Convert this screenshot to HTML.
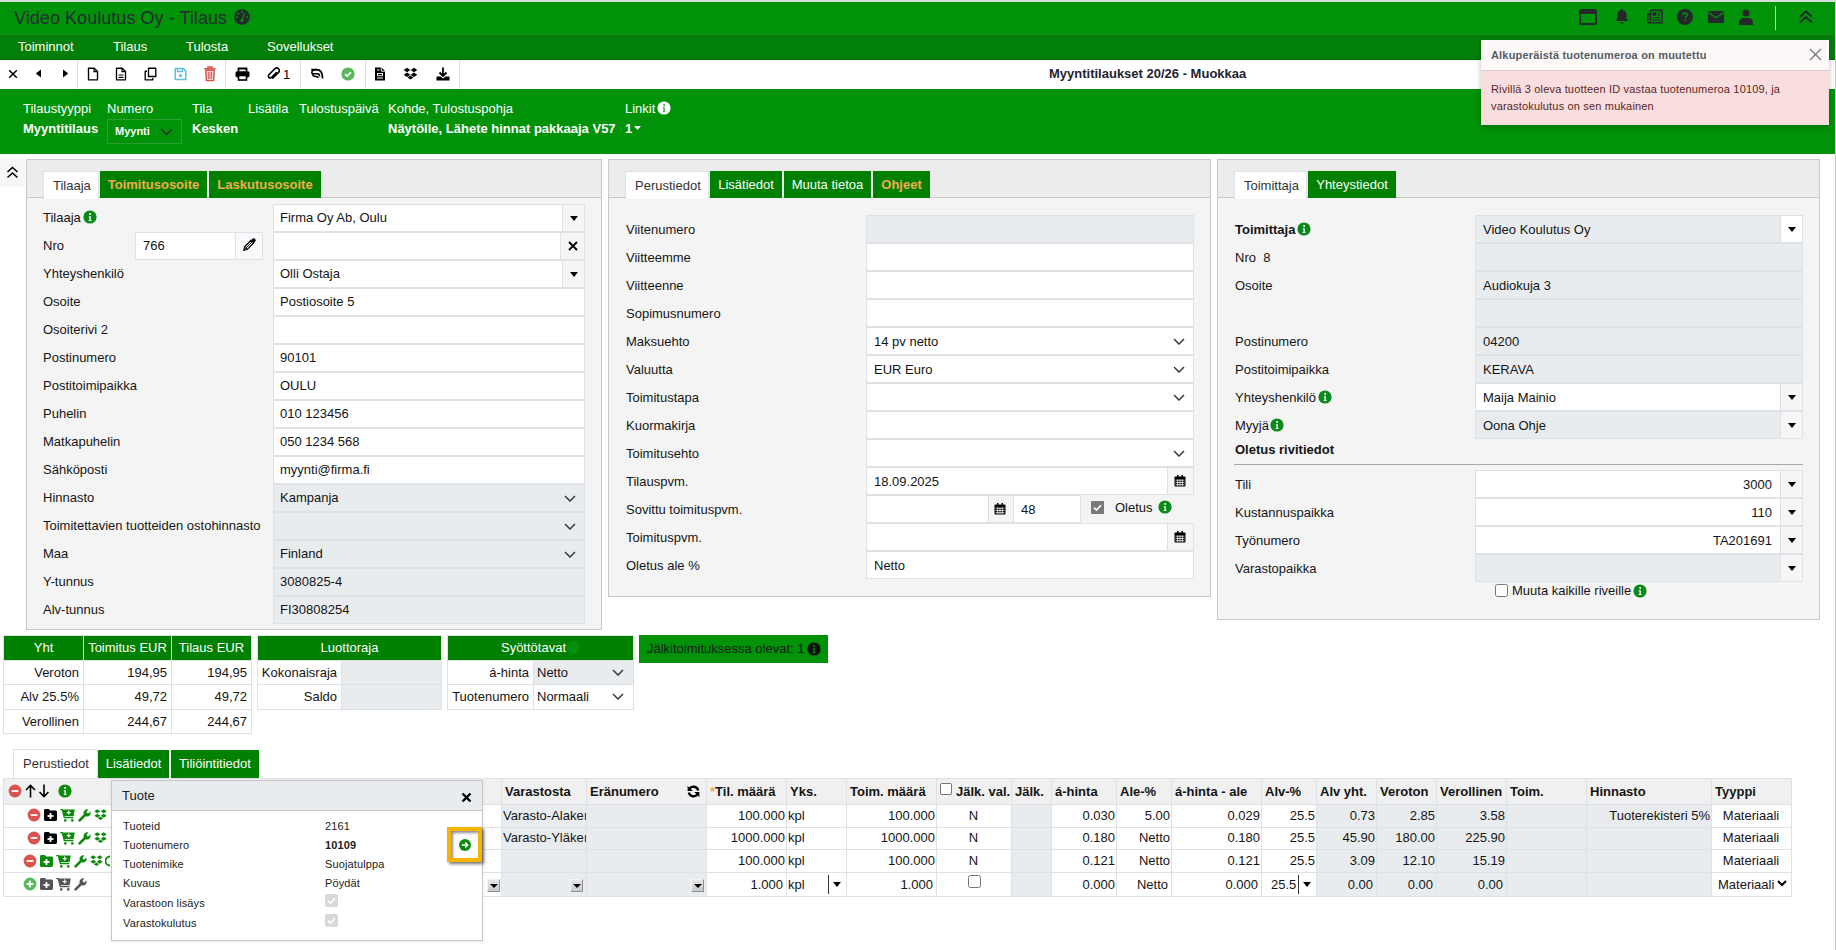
<!DOCTYPE html>
<html><head><meta charset="utf-8">
<style>
*{box-sizing:border-box}
html,body{margin:0;padding:0}
body{width:1836px;height:950px;overflow:hidden;position:relative;background:#fff;font-family:"Liberation Sans",sans-serif;font-size:13px;color:#141414}
.abs{position:absolute}
#topline{left:0;top:0;width:1836px;height:2px;background:#dcdcdc}
#rightline{left:1835px;top:0;width:1px;height:950px;background:#c8c8c8}
#topbar{left:0;top:2px;width:1835px;height:32px;background:#009208}
#title{left:14px;top:6px;font-size:18px;color:#262b30;letter-spacing:0.05px}
#menubar{left:0;top:34px;width:1835px;height:26px;background:#027f08;border-top:1px solid #1b8b1d;border-bottom:1px solid #006e05}
#menubar span{position:absolute;top:4px;color:#fff;font-size:13px}
#toolbar{left:0;top:60px;width:1835px;height:29px;background:#fff}
.tdiv{position:absolute;top:0;width:1px;height:29px;background:#dde1e6}
#header{left:0;top:89px;width:1835px;height:65px;background:#009208;color:#fff}
#header .l{position:absolute;top:12px;font-size:13px}
#header .v{position:absolute;top:32px;font-size:13px;font-weight:bold}
svg{display:block}

.pnl{position:absolute;border:1px solid #c8c8c8;background:#f4f4f4}
.tabbar{position:absolute;left:0;top:0;height:39px;background:#ececec;border-bottom:1px solid #c8c8c8}
.tab{position:absolute;height:28px;line-height:27px;font-size:13px;white-space:nowrap}
.tab.act{background:#fff;color:#333;border:1px solid #dde2e6;border-bottom:none;height:28px}
.tab.g{background:#008000;color:#fff;height:27px}
.tab.o{background:#008000;color:#f0ad4e;font-weight:bold;height:27px}
.lbl{position:absolute;height:28px;line-height:28px;font-size:13px;color:#141414;white-space:nowrap}
.inp{position:absolute;height:28px;border:1px solid #dee2e6;background:#fff;padding-left:7px;line-height:28px;overflow:hidden;white-space:nowrap;color:#141414}
.inp.ro{background:#e9ecef}
.p1{line-height:26px;padding-left:6px}
.cbtn{position:absolute;top:-1px;width:23px;height:28px;background:#f5f5f5;border:1px solid #dee2e6}
.cbtn.w{background:#fff}
.caret{position:absolute;left:7px;top:11px;width:0;height:0;border-left:4.5px solid transparent;border-right:4.5px solid transparent;border-top:5px solid #000}
.chev{position:absolute;top:10px}
.info{display:inline-block;vertical-align:middle}
.gt{position:absolute;border-collapse:collapse;font-size:13px}

</style></head>
<body>
<div class="abs" id="topline"></div>
<div class="abs" id="topbar">
  <div class="abs" id="title">Video Koulutus Oy - Tilaus</div>
  <svg class="abs" style="left:234px;top:7px" width="16" height="16" viewBox="0 0 16 16"><circle cx="8" cy="8" r="7.8" fill="#25282b"/><circle cx="8" cy="3" r="1.05" fill="#009208"/><circle cx="4.2" cy="4.6" r="1.05" fill="#009208"/><circle cx="2.9" cy="8.3" r="1.05" fill="#009208"/><circle cx="13.1" cy="8.3" r="1.05" fill="#009208"/><path d="M8 11.2L10.6 4.6" stroke="#009208" stroke-width="1.3" stroke-linecap="round"/><circle cx="8" cy="11.4" r="1.6" fill="#009208"/></svg>
  <svg class="abs" style="left:1579px;top:7px" width="18" height="16" viewBox="0 0 18 16"><rect x="1" y="1" width="16" height="14" rx="1.8" fill="none" stroke="#25282b" stroke-width="2"/><rect x="1" y="1" width="16" height="4" fill="#25282b"/></svg>
  <svg class="abs" style="left:1615px;top:6px" width="14" height="17" viewBox="0 0 14 17"><path d="M7 1C7.8 1 8.3 1.6 8.3 2.3C10.6 2.9 11.5 4.8 11.5 7.5V10.5L13.5 13H0.5L2.5 10.5V7.5C2.5 4.8 3.4 2.9 5.7 2.3C5.7 1.6 6.2 1 7 1Z" fill="#25282b"/><path d="M5 14.3H9L7 16.3Z" fill="#25282b"/></svg>
  <svg class="abs" style="left:1647px;top:7px" width="16" height="15" viewBox="0 0 16 15"><path d="M3.5 1.2H15V13.8H2.2C1.4 13.8 0.8 13.2 0.8 12.4V5H3.5" fill="none" stroke="#25282b" stroke-width="1.6"/><path d="M3.5 1.2V12.5" stroke="#25282b" stroke-width="1.6"/><rect x="5.5" y="3.2" width="4" height="3.5" fill="#25282b"/><path d="M10.8 3.8H13.2M10.8 6.2H13.2M5.5 8.8H13.2M5.5 11.2H13.2" stroke="#25282b" stroke-width="1.3"/></svg>
  <svg class="abs" style="left:1677px;top:7px" width="16" height="16" viewBox="0 0 16 16"><circle cx="8" cy="8" r="8" fill="#25282b"/><path d="M5.9 6.2C5.9 4.9 6.9 4.1 8.1 4.1C9.3 4.1 10.2 4.9 10.2 6C10.2 7.4 8.4 7.6 8.4 9" fill="none" stroke="#009208" stroke-width="1.5"/><circle cx="8.4" cy="11.3" r="0.95" fill="#009208"/></svg>
  <svg class="abs" style="left:1708px;top:9px" width="16" height="12" viewBox="0 0 16 12"><rect x="0" y="0" width="16" height="12" rx="1.5" fill="#25282b"/><path d="M0.5 1.5L8 6.8L15.5 1.5" fill="none" stroke="#009208" stroke-width="1.2"/></svg>
  <svg class="abs" style="left:1739px;top:7px" width="14" height="16" viewBox="0 0 14 16"><circle cx="7" cy="4" r="3.6" fill="#25282b"/><path d="M0 16V13.5C0 10.8 2 9 4.5 9H9.5C12 9 14 10.8 14 13.5V16Z" fill="#25282b"/></svg>
  <div class="abs" style="left:1775px;top:4px;width:1px;height:24px;background:#d5dcd5"></div>
  <svg class="abs" style="left:1799px;top:8px" width="14" height="14" viewBox="0 0 14 14"><path d="M1.5 6.5L7 1.5L12.5 6.5M1.5 12L7 7L12.5 12" fill="none" stroke="#25282b" stroke-width="1.8" stroke-linecap="round"/></svg>

</div>
<div class="abs" id="menubar">
  <span style="left:18px">Toiminnot</span>
  <span style="left:113px">Tilaus</span>
  <span style="left:186px">Tulosta</span>
  <span style="left:267px">Sovellukset</span>
</div>
<div class="abs" id="toolbar">
  
  <svg class="abs" style="left:8px;top:9px" width="10" height="10" viewBox="0 0 10 10"><path d="M1.2 1.2L8.8 8.8M8.8 1.2L1.2 8.8" stroke="#000" stroke-width="1.5"/></svg>
  <svg class="abs" style="left:35px;top:9px" width="7" height="9" viewBox="0 0 7 9"><path d="M6 0.5L0.8 4.5L6 8.5Z" fill="#000"/></svg>
  <svg class="abs" style="left:62px;top:9px" width="7" height="9" viewBox="0 0 7 9"><path d="M1 0.5L6.2 4.5L1 8.5Z" fill="#000"/></svg>
  <svg class="abs" style="left:87px;top:7px" width="12" height="14" viewBox="0 0 12 14"><path d="M1.5 1.2H7.2L10.5 4.5V12.8H1.5Z" fill="none" stroke="#000" stroke-width="1.35" stroke-linejoin="round"/><path d="M7 1.2V4.7H10.5" fill="none" stroke="#000" stroke-width="1.2"/></svg>
  <svg class="abs" style="left:115px;top:7px" width="12" height="14" viewBox="0 0 12 14"><path d="M1.5 1.2H7.2L10.5 4.5V12.8H1.5Z" fill="none" stroke="#000" stroke-width="1.35" stroke-linejoin="round"/><path d="M7 1.2V4.7H10.5M3.6 8H8.4M3.6 10.3H8.4" fill="none" stroke="#000" stroke-width="1.2"/></svg>
  <svg class="abs" style="left:144px;top:7px" width="13" height="14" viewBox="0 0 13 14"><path d="M4.5 1.2H11.8V9.5H4.5Z" fill="none" stroke="#000" stroke-width="1.35" stroke-linejoin="round"/><path d="M3 4.2H1.2V12.8H8.8V11" fill="none" stroke="#000" stroke-width="1.35" stroke-linejoin="round"/></svg>
  <svg class="abs" style="left:174px;top:7px" width="13" height="14" viewBox="0 0 13 14"><path d="M1.2 1.5H9.2L11.8 4.1V12.6H1.2Z" fill="none" stroke="#5bc0de" stroke-width="1.5" stroke-linejoin="round"/><path d="M3.5 1.5V4.5H8.5V1.5" fill="none" stroke="#5bc0de" stroke-width="1.3"/><circle cx="6.5" cy="8.6" r="1.6" fill="#5bc0de"/></svg>
  <svg class="abs" style="left:204px;top:6px" width="12" height="16" viewBox="0 0 12 16"><path d="M0.5 2.8H11.5" stroke="#d9534f" stroke-width="1.6"/><path d="M4 2.2V1H8V2.2" fill="none" stroke="#d9534f" stroke-width="1.4"/><path d="M1.8 4.2H10.2L9.6 14.6H2.4Z" fill="none" stroke="#d9534f" stroke-width="1.5"/><path d="M4.3 5.5V13M6 5.5V13M7.7 5.5V13" stroke="#d9534f" stroke-width="1.1"/></svg>
  <svg class="abs" style="left:235px;top:7px" width="15" height="14" viewBox="0 0 15 14"><path d="M3.5 4.5V1.5H11.5V4.5" fill="none" stroke="#000" stroke-width="1.8"/><rect x="0.5" y="4.3" width="14" height="6" rx="1.5" fill="#000"/><rect x="3.5" y="8.5" width="8" height="4.5" fill="#fff" stroke="#000" stroke-width="1.6"/></svg>
  <svg class="abs" style="left:267px;top:7px" width="13" height="14" viewBox="0 0 13 14"><path d="M9.5 5.5L4.6 10.4C3.8 11.2 2.6 11.2 1.9 10.4C1.1 9.7 1.1 8.5 1.9 7.7L7.8 1.8C8.9 0.8 10.5 0.8 11.5 1.8C12.5 2.8 12.5 4.4 11.5 5.5L5.8 11.2" fill="none" stroke="#000" stroke-width="1.6" stroke-linecap="round"/></svg>
  <div class="abs" style="left:283px;top:7px;font-size:13px;color:#000">1</div>
  <svg class="abs" style="left:310px;top:8px" width="14" height="12" viewBox="0 0 14 12"><path d="M1.2 1.6H6.5C10 1.6 12.6 4.2 12.6 10.6" fill="none" stroke="#000" stroke-width="1.7"/><path d="M6.5 1.6C4 1.6 1.8 2.8 1.8 4.4C1.8 5.6 3 5.8 4.5 5.8H7.2C8.6 5.8 9.6 6.8 9.6 8.4" fill="none" stroke="#000" stroke-width="1.6"/><path d="M3.4 5.8C2.4 6.4 2.6 8 4 8.2C5.2 8.4 7 8.4 8.6 9.6" fill="none" stroke="#000" stroke-width="1.5"/></svg>
  <svg class="abs" style="left:341px;top:7px" width="14" height="14" viewBox="0 0 14 14"><circle cx="7" cy="7" r="6.6" fill="#5cb85c"/><path d="M4 7.2L6.1 9.1L10 5.2" fill="none" stroke="#fff" stroke-width="1.6"/></svg>
  <svg class="abs" style="left:374px;top:7px" width="12" height="14" viewBox="0 0 12 14"><path d="M1 0.5H7.5L11 4V13.5H1Z" fill="#000"/><path d="M7.3 0.5V4.2H11" fill="none" stroke="#fff" stroke-width="0.9"/><rect x="3" y="6" width="6" height="3.2" fill="#fff"/><rect x="4" y="6.9" width="4" height="1.4" fill="#000"/><path d="M3 3H5.5M3 11H9" stroke="#fff" stroke-width="1"/></svg>
  <svg class="abs" style="left:403px;top:7px" width="15" height="13" viewBox="0 0 15 13"><path d="M4 0.8L7.3 3L4 5.2L0.7 3Z M11 0.8L14.3 3L11 5.2L7.7 3Z M4 5.6L7.3 7.8L4 10L0.7 7.8Z M11 5.6L14.3 7.8L11 10L7.7 7.8Z M7.5 8.6L10.5 10.6L7.5 12.6L4.5 10.6Z" fill="#000"/></svg>
  <svg class="abs" style="left:436px;top:7px" width="14" height="14" viewBox="0 0 14 14"><path d="M7 0.5V8.5" stroke="#000" stroke-width="1.8"/><path d="M3.5 5.5L7 9L10.5 5.5" fill="none" stroke="#000" stroke-width="1.8"/><path d="M0.5 9.5H4.5L7 11.5L9.5 9.5H13.5V13.5H0.5Z" fill="#000"/></svg>
  <div class="tdiv" style="left:77px"></div>
  <div class="tdiv" style="left:225px"></div>
  <div class="tdiv" style="left:300px"></div>
  <div class="tdiv" style="left:365px"></div>
  <div class="tdiv" style="left:459px"></div>
  <div class="abs" style="left:1049px;top:6px;font-weight:bold;font-size:13px;color:#1e2433">Myyntitilaukset 20/26 - Muokkaa</div>
</div>
<div class="abs" id="header">
  <span class="l" style="left:23px">Tilaustyyppi</span>
  <span class="l" style="left:107px">Numero</span>
  <span class="l" style="left:192px">Tila</span>
  <span class="l" style="left:248px">Lisätila</span>
  <span class="l" style="left:299px">Tulostuspäivä</span>
  <span class="l" style="left:388px">Kohde, Tulostuspohja</span>
  <span class="l" style="left:625px">Linkit</span>
  <span class="v" style="left:23px">Myyntitilaus</span>
  <span class="v" style="left:192px">Kesken</span>
  <span class="v" style="left:388px">Näytölle, Lähete hinnat pakkaaja V57</span>
  <span class="v" style="left:625px">1</span>
  <div class="abs" style="left:107px;top:30px;width:75px;height:25px;border:1px solid #2e9e33"></div>
  <span class="abs" style="left:115px;top:36px;font-size:11px;font-weight:bold">Myynti</span>
  <svg class="abs" style="left:160px;top:39px" width="13" height="8" viewBox="0 0 13 8"><path d="M1 1L6.5 6.5L12 1" fill="none" stroke="#2b2f33" stroke-width="1.4"/></svg>
  <svg class="abs" style="left:657px;top:12px" width="14" height="14" viewBox="0 0 14 14"><circle cx="7" cy="7" r="6.6" fill="#fff"/><circle cx="7.1" cy="4.1" r="0.95" fill="#009208"/><path d="M5.9 6.3H7.6V9.9H8.3V10.8H5.8V9.9H6.5V7.2H5.9Z" fill="#009208"/></svg>
  <svg class="abs" style="left:634px;top:37px" width="7" height="4" viewBox="0 0 7 4"><path d="M0 0H7L3.5 4Z" fill="#fff"/></svg>

</div>

<div class="abs" style="left:0;top:159px;width:25px;height:28px;background:#f5f6f8"></div>
<svg class="abs" style="left:6px;top:166px" width="13" height="13" viewBox="0 0 13 13"><path d="M1.5 6L6.5 1.5L11.5 6M1.5 11.5L6.5 7L11.5 11.5" fill="none" stroke="#000" stroke-width="1.6"/></svg>
<div class="pnl" style="left:26px;top:159px;width:576px;height:471px"></div><div class="abs" style="left:27px;top:160px;width:574px;height:38px;background:#ececec;border-bottom:1px solid #c8c8c8"></div><div class="tab act" style="left:43px;top:171px;width:56px;padding-left:9px;">Tilaaja</div><div class="tab o" style="left:100px;top:171px;width:107px;text-align:center">Toimitusosoite</div><div class="tab o" style="left:209px;top:171px;width:112px;text-align:center">Laskutusosoite</div>
<div class="lbl" style="left:43px;top:204px">Tilaaja</div>
<div class="lbl" style="left:43px;top:232px">Nro</div>
<div class="lbl" style="left:43px;top:260px">Yhteyshenkilö</div>
<div class="lbl" style="left:43px;top:288px">Osoite</div>
<div class="lbl" style="left:43px;top:316px">Osoiterivi 2</div>
<div class="lbl" style="left:43px;top:344px">Postinumero</div>
<div class="lbl" style="left:43px;top:372px">Postitoimipaikka</div>
<div class="lbl" style="left:43px;top:400px">Puhelin</div>
<div class="lbl" style="left:43px;top:428px">Matkapuhelin</div>
<div class="lbl" style="left:43px;top:456px">Sähköposti</div>
<div class="lbl" style="left:43px;top:484px">Hinnasto</div>
<div class="lbl" style="left:43px;top:512px">Toimitettavien tuotteiden ostohinnasto</div>
<div class="lbl" style="left:43px;top:540px">Maa</div>
<div class="lbl" style="left:43px;top:568px">Y-tunnus</div>
<div class="lbl" style="left:43px;top:596px">Alv-tunnus</div>
<svg class="abs" style="left:83px;top:210px" width="14" height="14" viewBox="0 0 14 14"><circle cx="7" cy="7" r="6.6" fill="#0b8a1c"/><circle cx="7.1" cy="4.1" r="1" fill="#fff"/><path d="M5.8 6.2H7.8V9.9H8.5V10.9H5.7V9.9H6.5V7.2H5.8Z" fill="#fff"/></svg>
<div class="inp p1" style="left:273px;top:204px;width:312px;">Firma Oy Ab, Oulu<div class="cbtn" style="left:288px"><div class="caret"></div></div></div>
<div class="inp p1" style="left:273px;top:232px;width:312px;"><div class="cbtn" style="left:286px;width:25px"><svg class="abs" style="left:7px;top:8px" width="10" height="10" viewBox="0 0 10 10"><path d="M1 1L9 9M9 1L1 9" stroke="#000" stroke-width="1.8"/></svg></div></div>
<div class="inp p1" style="left:273px;top:260px;width:312px;">Olli Ostaja<div class="cbtn" style="left:288px"><div class="caret"></div></div></div>
<div class="inp p1" style="left:273px;top:288px;width:312px;">Postiosoite 5</div>
<div class="inp p1" style="left:273px;top:316px;width:312px;"></div>
<div class="inp p1" style="left:273px;top:344px;width:312px;">90101</div>
<div class="inp p1" style="left:273px;top:372px;width:312px;">OULU</div>
<div class="inp p1" style="left:273px;top:400px;width:312px;">010 123456</div>
<div class="inp p1" style="left:273px;top:428px;width:312px;">050 1234 568</div>
<div class="inp p1" style="left:273px;top:456px;width:312px;">myynti@firma.fi</div>
<div class="inp ro p1" style="left:273px;top:484px;width:312px;">Kampanja<div class="chev" style="left:290px"><svg width="12" height="7" viewBox="0 0 12 7"><path d="M1 1L6 6L11 1" fill="none" stroke="#343a40" stroke-width="1.5"/></svg></div></div>
<div class="inp ro p1" style="left:273px;top:512px;width:312px;"><div class="chev" style="left:290px"><svg width="12" height="7" viewBox="0 0 12 7"><path d="M1 1L6 6L11 1" fill="none" stroke="#343a40" stroke-width="1.5"/></svg></div></div>
<div class="inp ro p1" style="left:273px;top:540px;width:312px;">Finland<div class="chev" style="left:290px"><svg width="12" height="7" viewBox="0 0 12 7"><path d="M1 1L6 6L11 1" fill="none" stroke="#343a40" stroke-width="1.5"/></svg></div></div>
<div class="inp ro p1" style="left:273px;top:568px;width:312px;">3080825-4</div>
<div class="inp ro p1" style="left:273px;top:596px;width:312px;">FI30808254</div>
<div class="inp" style="left:135px;top:232px;width:101px;line-height:26px">766</div>
<div class="abs" style="left:235px;top:232px;width:28px;height:28px;background:#f8f9fa;border:1px solid #dee2e6"></div>
<svg class="abs" style="left:242px;top:238px" width="14" height="14" viewBox="0 0 14 14"><path d="M1 13L1.8 9.6L4.4 12.2Z" fill="#000"/><path d="M2.4 9L9.2 2.2L11.8 4.8L5 11.6Z" fill="#fff" stroke="#000" stroke-width="1.3" stroke-linejoin="round"/><path d="M4 10L10.2 3.8" stroke="#000" stroke-width="0.9"/><path d="M9.6 1.8L10.8 0.6C11.3 0.1 12 0.1 12.5 0.6L13.4 1.5C13.9 2 13.9 2.7 13.4 3.2L12.2 4.4Z" fill="#000"/></svg>
<div class="pnl" style="left:608px;top:159px;width:603px;height:438px"></div><div class="abs" style="left:609px;top:160px;width:601px;height:38px;background:#ececec;border-bottom:1px solid #c8c8c8"></div><div class="tab act" style="left:625px;top:171px;width:84px;padding-left:9px;">Perustiedot</div><div class="tab g" style="left:710px;top:171px;width:72px;text-align:center">Lisätiedot</div><div class="tab g" style="left:784px;top:171px;width:87px;text-align:center">Muuta tietoa</div><div class="tab o" style="left:873px;top:171px;width:57px;text-align:center">Ohjeet</div>
<div class="lbl" style="left:626px;top:216px">Viitenumero</div>
<div class="lbl" style="left:626px;top:244px">Viitteemme</div>
<div class="lbl" style="left:626px;top:272px">Viitteenne</div>
<div class="lbl" style="left:626px;top:300px">Sopimusnumero</div>
<div class="lbl" style="left:626px;top:328px">Maksuehto</div>
<div class="lbl" style="left:626px;top:356px">Valuutta</div>
<div class="lbl" style="left:626px;top:384px">Toimitustapa</div>
<div class="lbl" style="left:626px;top:412px">Kuormakirja</div>
<div class="lbl" style="left:626px;top:440px">Toimitusehto</div>
<div class="lbl" style="left:626px;top:468px">Tilauspvm.</div>
<div class="lbl" style="left:626px;top:496px">Sovittu toimituspvm.</div>
<div class="lbl" style="left:626px;top:524px">Toimituspvm.</div>
<div class="lbl" style="left:626px;top:552px">Oletus ale %</div>
<div class="inp ro" style="left:866px;top:215px;width:328px;"></div>
<div class="inp" style="left:866px;top:243px;width:328px;"></div>
<div class="inp" style="left:866px;top:271px;width:328px;"></div>
<div class="inp" style="left:866px;top:299px;width:328px;"></div>
<div class="inp" style="left:866px;top:327px;width:328px;">14 pv netto<div class="chev" style="left:306px"><svg width="12" height="7" viewBox="0 0 12 7"><path d="M1 1L6 6L11 1" fill="none" stroke="#343a40" stroke-width="1.5"/></svg></div></div>
<div class="inp" style="left:866px;top:355px;width:328px;">EUR Euro<div class="chev" style="left:306px"><svg width="12" height="7" viewBox="0 0 12 7"><path d="M1 1L6 6L11 1" fill="none" stroke="#343a40" stroke-width="1.5"/></svg></div></div>
<div class="inp" style="left:866px;top:383px;width:328px;"><div class="chev" style="left:306px"><svg width="12" height="7" viewBox="0 0 12 7"><path d="M1 1L6 6L11 1" fill="none" stroke="#343a40" stroke-width="1.5"/></svg></div></div>
<div class="inp" style="left:866px;top:411px;width:328px;"></div>
<div class="inp" style="left:866px;top:439px;width:328px;"><div class="chev" style="left:306px"><svg width="12" height="7" viewBox="0 0 12 7"><path d="M1 1L6 6L11 1" fill="none" stroke="#343a40" stroke-width="1.5"/></svg></div></div>
<div class="inp" style="left:866px;top:467px;width:328px;">18.09.2025</div>
<div class="abs" style="left:1167px;top:467px;width:27px;height:28px;background:#f5f5f5;border:1px solid #dee2e6"></div><div class="abs" style="left:1174px;top:475px"><svg width="12" height="12" viewBox="0 0 12 12"><rect x="0.5" y="1.5" width="11" height="10" rx="1" fill="#000"/><rect x="3" y="0" width="1.5" height="2.5" fill="#000"/><rect x="7.5" y="0" width="1.5" height="2.5" fill="#000"/><path d="M1.5 5.2H10.5M1.5 7.5H10.5M1.5 9.7H10.5" stroke="#f5f5f5" stroke-width="0.8"/><path d="M3.7 4.5V11M6 4.5V11M8.3 4.5V11" stroke="#f5f5f5" stroke-width="0.8"/></svg></div>
<div class="inp" style="left:866px;top:495px;width:123px;"></div>
<div class="abs" style="left:988px;top:495px;width:26px;height:28px;background:#f5f5f5;border:1px solid #dee2e6"></div><div class="abs" style="left:994px;top:503px"><svg width="12" height="12" viewBox="0 0 12 12"><rect x="0.5" y="1.5" width="11" height="10" rx="1" fill="#000"/><rect x="3" y="0" width="1.5" height="2.5" fill="#000"/><rect x="7.5" y="0" width="1.5" height="2.5" fill="#000"/><path d="M1.5 5.2H10.5M1.5 7.5H10.5M1.5 9.7H10.5" stroke="#f5f5f5" stroke-width="0.8"/><path d="M3.7 4.5V11M6 4.5V11M8.3 4.5V11" stroke="#f5f5f5" stroke-width="0.8"/></svg></div>
<div class="inp" style="left:1013px;top:495px;width:68px;">48</div>
<svg class="abs" style="left:1091px;top:501px" width="13" height="13" viewBox="0 0 13 13"><rect x="0" y="0" width="13" height="13" rx="1" fill="#7a7a7a"/><path d="M3 6.6L5.4 9L10 4.2" fill="none" stroke="#fff" stroke-width="1.6"/></svg>
<div class="lbl" style="left:1115px;top:494px">Oletus</div>
<svg class="abs" style="left:1158px;top:500px" width="14" height="14" viewBox="0 0 14 14"><circle cx="7" cy="7" r="6.6" fill="#0b8a1c"/><circle cx="7.1" cy="4.1" r="1" fill="#fff"/><path d="M5.8 6.2H7.8V9.9H8.5V10.9H5.7V9.9H6.5V7.2H5.8Z" fill="#fff"/></svg>
<div class="inp" style="left:866px;top:523px;width:328px;"></div>
<div class="abs" style="left:1167px;top:523px;width:27px;height:28px;background:#f5f5f5;border:1px solid #dee2e6"></div><div class="abs" style="left:1174px;top:531px"><svg width="12" height="12" viewBox="0 0 12 12"><rect x="0.5" y="1.5" width="11" height="10" rx="1" fill="#000"/><rect x="3" y="0" width="1.5" height="2.5" fill="#000"/><rect x="7.5" y="0" width="1.5" height="2.5" fill="#000"/><path d="M1.5 5.2H10.5M1.5 7.5H10.5M1.5 9.7H10.5" stroke="#f5f5f5" stroke-width="0.8"/><path d="M3.7 4.5V11M6 4.5V11M8.3 4.5V11" stroke="#f5f5f5" stroke-width="0.8"/></svg></div>
<div class="inp" style="left:866px;top:551px;width:328px;">Netto</div>
<div class="pnl" style="left:1217px;top:159px;width:603px;height:461px"></div><div class="abs" style="left:1218px;top:160px;width:601px;height:38px;background:#ececec;border-bottom:1px solid #c8c8c8"></div><div class="tab act" style="left:1234px;top:171px;width:73px;padding-left:9px;">Toimittaja</div><div class="tab g" style="left:1308px;top:171px;width:88px;text-align:center">Yhteystiedot</div>
<div class="lbl" style="left:1235px;top:216px"><b>Toimittaja</b></div>
<div class="inp ro" style="left:1475px;top:215px;width:328px;">Video Koulutus Oy<div class="cbtn w" style="left:304px"><div class="caret"></div></div></div>
<div class="lbl" style="left:1235px;top:244px">Nro&nbsp; 8</div>
<div class="inp ro" style="left:1475px;top:243px;width:328px;"></div>
<div class="lbl" style="left:1235px;top:272px">Osoite</div>
<div class="inp ro" style="left:1475px;top:271px;width:328px;">Audiokuja 3</div>
<div class="lbl" style="left:1235px;top:300px"></div>
<div class="inp ro" style="left:1475px;top:299px;width:328px;"></div>
<div class="lbl" style="left:1235px;top:328px">Postinumero</div>
<div class="inp ro" style="left:1475px;top:327px;width:328px;">04200</div>
<div class="lbl" style="left:1235px;top:356px">Postitoimipaikka</div>
<div class="inp ro" style="left:1475px;top:355px;width:328px;">KERAVA</div>
<div class="lbl" style="left:1235px;top:384px">Yhteyshenkilö</div>
<div class="inp" style="left:1475px;top:383px;width:328px;">Maija Mainio<div class="cbtn" style="left:304px"><div class="caret"></div></div></div>
<div class="lbl" style="left:1235px;top:412px">Myyjä</div>
<div class="inp ro" style="left:1475px;top:411px;width:328px;">Oona Ohje<div class="cbtn" style="left:304px"><div class="caret"></div></div></div>
<svg class="abs" style="left:1297px;top:222px" width="14" height="14" viewBox="0 0 14 14"><circle cx="7" cy="7" r="6.6" fill="#0b8a1c"/><circle cx="7.1" cy="4.1" r="1" fill="#fff"/><path d="M5.8 6.2H7.8V9.9H8.5V10.9H5.7V9.9H6.5V7.2H5.8Z" fill="#fff"/></svg>
<svg class="abs" style="left:1318px;top:390px" width="14" height="14" viewBox="0 0 14 14"><circle cx="7" cy="7" r="6.6" fill="#0b8a1c"/><circle cx="7.1" cy="4.1" r="1" fill="#fff"/><path d="M5.8 6.2H7.8V9.9H8.5V10.9H5.7V9.9H6.5V7.2H5.8Z" fill="#fff"/></svg>
<svg class="abs" style="left:1270px;top:418px" width="14" height="14" viewBox="0 0 14 14"><circle cx="7" cy="7" r="6.6" fill="#0b8a1c"/><circle cx="7.1" cy="4.1" r="1" fill="#fff"/><path d="M5.8 6.2H7.8V9.9H8.5V10.9H5.7V9.9H6.5V7.2H5.8Z" fill="#fff"/></svg>
<div class="lbl" style="left:1235px;top:436px;font-weight:bold">Oletus rivitiedot</div>
<div class="abs" style="left:1234px;top:464px;width:569px;height:1px;background:#a8a8a8"></div>
<div class="lbl" style="left:1235px;top:471px">Tili</div>
<div class="inp" style="left:1475px;top:470px;width:328px;text-align:right;padding-right:30px;">3000<div class="cbtn" style="left:304px"><div class="caret"></div></div></div>
<div class="lbl" style="left:1235px;top:499px">Kustannuspaikka</div>
<div class="inp" style="left:1475px;top:498px;width:328px;text-align:right;padding-right:30px;">110<div class="cbtn" style="left:304px"><div class="caret"></div></div></div>
<div class="lbl" style="left:1235px;top:527px">Työnumero</div>
<div class="inp" style="left:1475px;top:526px;width:328px;text-align:right;padding-right:30px;">TA201691<div class="cbtn" style="left:304px"><div class="caret"></div></div></div>
<div class="lbl" style="left:1235px;top:555px">Varastopaikka</div>
<div class="inp ro" style="left:1475px;top:554px;width:328px;text-align:right;padding-right:30px;"><div class="cbtn" style="left:304px"><div class="caret"></div></div></div>
<svg class="abs" style="left:1495px;top:584px" width="13" height="13" viewBox="0 0 13 13"><rect x="0.5" y="0.5" width="12" height="12" rx="2" fill="#fff" stroke="#767676"/></svg>
<div class="lbl" style="left:1512px;top:577px">Muuta kaikille riveille</div>
<svg class="abs" style="left:1633px;top:584px" width="14" height="14" viewBox="0 0 14 14"><circle cx="7" cy="7" r="6.6" fill="#0b8a1c"/><circle cx="7.1" cy="4.1" r="1" fill="#fff"/><path d="M5.8 6.2H7.8V9.9H8.5V10.9H5.7V9.9H6.5V7.2H5.8Z" fill="#fff"/></svg>
<div class="abs" style="left:3px;top:635px;width:81px;height:26px;background:#008000;border:1px solid #dee2e6;line-height:24px;text-align:center;color:#fff;font-size:13px;white-space:nowrap;overflow:hidden;">Yht</div>
<div class="abs" style="left:83px;top:635px;width:89px;height:26px;background:#008000;border:1px solid #dee2e6;line-height:24px;text-align:center;color:#fff;font-size:13px;white-space:nowrap;overflow:hidden;">Toimitus EUR</div>
<div class="abs" style="left:171px;top:635px;width:81px;height:26px;background:#008000;border:1px solid #dee2e6;line-height:24px;text-align:center;color:#fff;font-size:13px;white-space:nowrap;overflow:hidden;">Tilaus EUR</div>
<div class="abs" style="left:3px;top:660px;width:81px;height:25px;background:#fff;border:1px solid #dee2e6;line-height:23px;text-align:right;color:#141414;font-size:13px;white-space:nowrap;overflow:hidden;padding-right:4px;">Veroton</div>
<div class="abs" style="left:83px;top:660px;width:89px;height:25px;background:#fff;border:1px solid #dee2e6;line-height:23px;text-align:right;color:#141414;font-size:13px;white-space:nowrap;overflow:hidden;padding-right:4px;">194,95</div>
<div class="abs" style="left:171px;top:660px;width:81px;height:25px;background:#fff;border:1px solid #dee2e6;line-height:23px;text-align:right;color:#141414;font-size:13px;white-space:nowrap;overflow:hidden;padding-right:4px;">194,95</div>
<div class="abs" style="left:3px;top:684px;width:81px;height:26px;background:#fff;border:1px solid #dee2e6;line-height:24px;text-align:right;color:#141414;font-size:13px;white-space:nowrap;overflow:hidden;padding-right:4px;">Alv 25.5%</div>
<div class="abs" style="left:83px;top:684px;width:89px;height:26px;background:#fff;border:1px solid #dee2e6;line-height:24px;text-align:right;color:#141414;font-size:13px;white-space:nowrap;overflow:hidden;padding-right:4px;">49,72</div>
<div class="abs" style="left:171px;top:684px;width:81px;height:26px;background:#fff;border:1px solid #dee2e6;line-height:24px;text-align:right;color:#141414;font-size:13px;white-space:nowrap;overflow:hidden;padding-right:4px;">49,72</div>
<div class="abs" style="left:3px;top:709px;width:81px;height:25px;background:#fff;border:1px solid #dee2e6;line-height:23px;text-align:right;color:#141414;font-size:13px;white-space:nowrap;overflow:hidden;padding-right:4px;">Verollinen</div>
<div class="abs" style="left:83px;top:709px;width:89px;height:25px;background:#fff;border:1px solid #dee2e6;line-height:23px;text-align:right;color:#141414;font-size:13px;white-space:nowrap;overflow:hidden;padding-right:4px;">244,67</div>
<div class="abs" style="left:171px;top:709px;width:81px;height:25px;background:#fff;border:1px solid #dee2e6;line-height:23px;text-align:right;color:#141414;font-size:13px;white-space:nowrap;overflow:hidden;padding-right:4px;">244,67</div>
<div class="abs" style="left:257px;top:635px;width:185px;height:26px;background:#008000;border:1px solid #dee2e6;line-height:24px;text-align:center;color:#fff;font-size:13px;white-space:nowrap;overflow:hidden;">Luottoraja</div>
<div class="abs" style="left:257px;top:660px;width:85px;height:25px;background:#fff;border:1px solid #dee2e6;line-height:23px;text-align:right;color:#141414;font-size:13px;white-space:nowrap;overflow:hidden;padding-right:4px;">Kokonaisraja</div>
<div class="abs" style="left:341px;top:660px;width:101px;height:25px;background:#e9ecef;border:1px solid #dee2e6;line-height:23px;text-align:right;color:#141414;font-size:13px;white-space:nowrap;overflow:hidden;padding-right:4px;"></div>
<div class="abs" style="left:257px;top:684px;width:85px;height:26px;background:#fff;border:1px solid #dee2e6;line-height:24px;text-align:right;color:#141414;font-size:13px;white-space:nowrap;overflow:hidden;padding-right:4px;">Saldo</div>
<div class="abs" style="left:341px;top:684px;width:101px;height:26px;background:#e9ecef;border:1px solid #dee2e6;line-height:24px;text-align:right;color:#141414;font-size:13px;white-space:nowrap;overflow:hidden;padding-right:4px;"></div>
<div class="abs" style="left:447px;top:635px;width:187px;height:26px;background:#008000;border:1px solid #dee2e6;line-height:24px;text-align:center;color:#fff;font-size:13px;white-space:nowrap;overflow:hidden;">Syöttötavat<span style="display:inline-block;width:13px;height:13px;border-radius:7px;background:#04900c;vertical-align:-2px;margin-left:1px"></span></div>
<div class="abs" style="left:447px;top:660px;width:87px;height:25px;background:#fff;border:1px solid #dee2e6;line-height:23px;text-align:right;color:#141414;font-size:13px;white-space:nowrap;overflow:hidden;padding-right:4px;">á-hinta</div>
<div class="abs" style="left:533px;top:660px;width:101px;height:25px;background:#e9ecef;border:1px solid #dee2e6;line-height:23px;text-align:left;color:#141414;font-size:13px;white-space:nowrap;overflow:hidden;padding-left:3px;">Netto</div>
<div class="abs" style="left:612px;top:669px"><svg width="12" height="7" viewBox="0 0 12 7"><path d="M1 1L6 6L11 1" fill="none" stroke="#343a40" stroke-width="1.5"/></svg></div>
<div class="abs" style="left:447px;top:684px;width:87px;height:26px;background:#fff;border:1px solid #dee2e6;line-height:24px;text-align:right;color:#141414;font-size:13px;white-space:nowrap;overflow:hidden;padding-right:4px;">Tuotenumero</div>
<div class="abs" style="left:533px;top:684px;width:101px;height:26px;background:#fff;border:1px solid #dee2e6;line-height:24px;text-align:left;color:#141414;font-size:13px;white-space:nowrap;overflow:hidden;padding-left:3px;">Normaali</div>
<div class="abs" style="left:612px;top:693px"><svg width="12" height="7" viewBox="0 0 12 7"><path d="M1 1L6 6L11 1" fill="none" stroke="#343a40" stroke-width="1.5"/></svg></div>
<div class="abs" style="left:639px;top:635px;width:189px;height:28px;background:#009208;color:#1b1b1b;line-height:27px;padding-left:8px;font-size:13px">Jälkitoimituksessa olevat: 1</div>
<svg class="abs" style="left:807px;top:642px" width="14" height="14" viewBox="0 0 14 14"><circle cx="7" cy="7" r="6.6" fill="#111"/><circle cx="7.1" cy="4.1" r="1" fill="#009208"/><path d="M5.8 6.2H7.8V9.9H8.5V10.9H5.7V9.9H6.5V7.2H5.8Z" fill="#009208"/></svg>
<div class="abs" style="left:13px;top:749px;width:85px;height:30px;background:#fff;border:1px solid #dee2e6;border-bottom:none;line-height:27px;padding-left:9px;color:#333">Perustiedot</div>
<div class="abs" style="left:98px;top:750px;width:71px;height:28px;background:#008000;color:#fff;line-height:27px;text-align:center">Lisätiedot</div>
<div class="abs" style="left:171px;top:750px;width:88px;height:28px;background:#008000;color:#fff;line-height:27px;text-align:center">Tiliöintitiedot</div>
<div class="abs" style="left:3px;top:778px;width:1789px;height:119px;border:1px solid #dee2e6;background:#fff"></div>
<div class="abs" style="left:4px;top:779px;width:1787px;height:25px;background:#f0f0f0"></div>
<div class="abs" style="left:4px;top:804px;width:1787px;height:1px;background:#dee2e6"></div>
<div class="abs" style="left:4px;top:827px;width:1787px;height:1px;background:#dee2e6"></div>
<div class="abs" style="left:4px;top:849px;width:1787px;height:1px;background:#dee2e6"></div>
<div class="abs" style="left:4px;top:872px;width:1787px;height:1px;background:#dee2e6"></div>
<div class="abs" style="left:501px;top:804px;width:85px;height:92px;background:#e9ecef"></div>
<div class="abs" style="left:586px;top:804px;width:120px;height:92px;background:#e9ecef"></div>
<div class="abs" style="left:1011px;top:804px;width:40px;height:92px;background:#e9ecef"></div>
<div class="abs" style="left:1316px;top:804px;width:60px;height:92px;background:#e9ecef"></div>
<div class="abs" style="left:1376px;top:804px;width:60px;height:92px;background:#e9ecef"></div>
<div class="abs" style="left:1436px;top:804px;width:70px;height:92px;background:#e9ecef"></div>
<div class="abs" style="left:1506px;top:804px;width:80px;height:92px;background:#e9ecef"></div>
<div class="abs" style="left:1586px;top:804px;width:125px;height:92px;background:#e9ecef"></div>
<div class="abs" style="left:482px;top:804px;width:1310px;height:1px;background:#dee2e6"></div>
<div class="abs" style="left:482px;top:827px;width:1310px;height:1px;background:#dee2e6"></div>
<div class="abs" style="left:482px;top:849px;width:1310px;height:1px;background:#dee2e6"></div>
<div class="abs" style="left:482px;top:872px;width:1310px;height:1px;background:#dee2e6"></div>
<div class="abs" style="left:482px;top:779px;width:1px;height:117px;background:#dee2e6"></div>
<div class="abs" style="left:501px;top:779px;width:1px;height:117px;background:#dee2e6"></div>
<div class="abs" style="left:505px;top:779px;height:25px;line-height:25px;font-weight:bold;white-space:nowrap">Varastosta</div>
<div class="abs" style="left:586px;top:779px;width:1px;height:117px;background:#dee2e6"></div>
<div class="abs" style="left:590px;top:779px;height:25px;line-height:25px;font-weight:bold;white-space:nowrap">Eränumero</div>
<div class="abs" style="left:706px;top:779px;width:1px;height:117px;background:#dee2e6"></div>
<div class="abs" style="left:710px;top:779px;height:25px;line-height:25px;font-weight:bold;white-space:nowrap"><span style="color:#f0ad4e">*</span>Til. määrä</div>
<div class="abs" style="left:786px;top:779px;width:1px;height:117px;background:#dee2e6"></div>
<div class="abs" style="left:790px;top:779px;height:25px;line-height:25px;font-weight:bold;white-space:nowrap">Yks.</div>
<div class="abs" style="left:846px;top:779px;width:1px;height:117px;background:#dee2e6"></div>
<div class="abs" style="left:850px;top:779px;height:25px;line-height:25px;font-weight:bold;white-space:nowrap">Toim. määrä</div>
<div class="abs" style="left:936px;top:779px;width:1px;height:117px;background:#dee2e6"></div>
<div class="abs" style="left:940px;top:779px;height:25px;line-height:25px;font-weight:bold;white-space:nowrap"><span style="display:inline-block;width:12px;height:12px;border:1px solid #767676;border-radius:2px;background:#fff;vertical-align:1px;margin-right:4px"></span>Jälk. val.</div>
<div class="abs" style="left:1011px;top:779px;width:1px;height:117px;background:#dee2e6"></div>
<div class="abs" style="left:1015px;top:779px;height:25px;line-height:25px;font-weight:bold;white-space:nowrap">Jälk.</div>
<div class="abs" style="left:1051px;top:779px;width:1px;height:117px;background:#dee2e6"></div>
<div class="abs" style="left:1055px;top:779px;height:25px;line-height:25px;font-weight:bold;white-space:nowrap">á-hinta</div>
<div class="abs" style="left:1116px;top:779px;width:1px;height:117px;background:#dee2e6"></div>
<div class="abs" style="left:1120px;top:779px;height:25px;line-height:25px;font-weight:bold;white-space:nowrap">Ale-%</div>
<div class="abs" style="left:1171px;top:779px;width:1px;height:117px;background:#dee2e6"></div>
<div class="abs" style="left:1175px;top:779px;height:25px;line-height:25px;font-weight:bold;white-space:nowrap">á-hinta - ale</div>
<div class="abs" style="left:1261px;top:779px;width:1px;height:117px;background:#dee2e6"></div>
<div class="abs" style="left:1265px;top:779px;height:25px;line-height:25px;font-weight:bold;white-space:nowrap">Alv-%</div>
<div class="abs" style="left:1316px;top:779px;width:1px;height:117px;background:#dee2e6"></div>
<div class="abs" style="left:1320px;top:779px;height:25px;line-height:25px;font-weight:bold;white-space:nowrap">Alv yht.</div>
<div class="abs" style="left:1376px;top:779px;width:1px;height:117px;background:#dee2e6"></div>
<div class="abs" style="left:1380px;top:779px;height:25px;line-height:25px;font-weight:bold;white-space:nowrap">Veroton</div>
<div class="abs" style="left:1436px;top:779px;width:1px;height:117px;background:#dee2e6"></div>
<div class="abs" style="left:1440px;top:779px;height:25px;line-height:25px;font-weight:bold;white-space:nowrap">Verollinen</div>
<div class="abs" style="left:1506px;top:779px;width:1px;height:117px;background:#dee2e6"></div>
<div class="abs" style="left:1510px;top:779px;height:25px;line-height:25px;font-weight:bold;white-space:nowrap">Toim.</div>
<div class="abs" style="left:1586px;top:779px;width:1px;height:117px;background:#dee2e6"></div>
<div class="abs" style="left:1590px;top:779px;height:25px;line-height:25px;font-weight:bold;white-space:nowrap">Hinnasto</div>
<div class="abs" style="left:1711px;top:779px;width:1px;height:117px;background:#dee2e6"></div>
<div class="abs" style="left:1715px;top:779px;height:25px;line-height:25px;font-weight:bold;white-space:nowrap">Tyyppi</div>
<svg class="abs" style="left:687px;top:785px" width="13" height="13" viewBox="0 0 13 13"><path d="M11.2 5.4A4.9 4.9 0 0 0 2.4 3.8" fill="none" stroke="#000" stroke-width="2.3"/><path d="M0.6 0.8V6H5.8Z" fill="#000"/><path d="M1.8 7.6A4.9 4.9 0 0 0 10.6 9.2" fill="none" stroke="#000" stroke-width="2.3"/><path d="M12.4 12.2V7H7.2Z" fill="#000"/></svg>
<div class="abs" style="left:503px;top:804px;height:23px;line-height:23px;white-space:nowrap;overflow:hidden;width:83px;">Varasto-Alakeı</div>
<div class="abs" style="left:706px;width:79px;text-align:right;top:804px;height:23px;line-height:23px;white-space:nowrap;">100.000</div>
<div class="abs" style="left:788px;top:804px;height:23px;line-height:23px;white-space:nowrap;">kpl</div>
<div class="abs" style="left:846px;width:89px;text-align:right;top:804px;height:23px;line-height:23px;white-space:nowrap;">100.000</div>
<div class="abs" style="left:936px;width:75px;text-align:center;top:804px;height:23px;line-height:23px;white-space:nowrap;">N</div>
<div class="abs" style="left:1051px;width:64px;text-align:right;top:804px;height:23px;line-height:23px;white-space:nowrap;">0.030</div>
<div class="abs" style="left:1116px;width:54px;text-align:right;top:804px;height:23px;line-height:23px;white-space:nowrap;">5.00</div>
<div class="abs" style="left:1171px;width:89px;text-align:right;top:804px;height:23px;line-height:23px;white-space:nowrap;">0.029</div>
<div class="abs" style="left:1261px;width:54px;text-align:right;top:804px;height:23px;line-height:23px;white-space:nowrap;">25.5</div>
<div class="abs" style="left:1316px;width:59px;text-align:right;top:804px;height:23px;line-height:23px;white-space:nowrap;">0.73</div>
<div class="abs" style="left:1376px;width:59px;text-align:right;top:804px;height:23px;line-height:23px;white-space:nowrap;">2.85</div>
<div class="abs" style="left:1436px;width:69px;text-align:right;top:804px;height:23px;line-height:23px;white-space:nowrap;">3.58</div>
<div class="abs" style="left:1586px;width:124px;text-align:right;top:804px;height:23px;line-height:23px;white-space:nowrap;">Tuoterekisteri 5%</div>
<div class="abs" style="left:1711px;width:80px;text-align:center;top:804px;height:23px;line-height:23px;white-space:nowrap;">Materiaali</div>
<div class="abs" style="left:503px;top:827px;height:22px;line-height:22px;white-space:nowrap;overflow:hidden;width:83px;">Varasto-Yläkeı</div>
<div class="abs" style="left:706px;width:79px;text-align:right;top:827px;height:22px;line-height:22px;white-space:nowrap;">1000.000</div>
<div class="abs" style="left:788px;top:827px;height:22px;line-height:22px;white-space:nowrap;">kpl</div>
<div class="abs" style="left:846px;width:89px;text-align:right;top:827px;height:22px;line-height:22px;white-space:nowrap;">1000.000</div>
<div class="abs" style="left:936px;width:75px;text-align:center;top:827px;height:22px;line-height:22px;white-space:nowrap;">N</div>
<div class="abs" style="left:1051px;width:64px;text-align:right;top:827px;height:22px;line-height:22px;white-space:nowrap;">0.180</div>
<div class="abs" style="left:1116px;width:54px;text-align:right;top:827px;height:22px;line-height:22px;white-space:nowrap;">Netto</div>
<div class="abs" style="left:1171px;width:89px;text-align:right;top:827px;height:22px;line-height:22px;white-space:nowrap;">0.180</div>
<div class="abs" style="left:1261px;width:54px;text-align:right;top:827px;height:22px;line-height:22px;white-space:nowrap;">25.5</div>
<div class="abs" style="left:1316px;width:59px;text-align:right;top:827px;height:22px;line-height:22px;white-space:nowrap;">45.90</div>
<div class="abs" style="left:1376px;width:59px;text-align:right;top:827px;height:22px;line-height:22px;white-space:nowrap;">180.00</div>
<div class="abs" style="left:1436px;width:69px;text-align:right;top:827px;height:22px;line-height:22px;white-space:nowrap;">225.90</div>
<div class="abs" style="left:1711px;width:80px;text-align:center;top:827px;height:22px;line-height:22px;white-space:nowrap;">Materiaali</div>
<div class="abs" style="left:706px;width:79px;text-align:right;top:849px;height:23px;line-height:23px;white-space:nowrap;">100.000</div>
<div class="abs" style="left:788px;top:849px;height:23px;line-height:23px;white-space:nowrap;">kpl</div>
<div class="abs" style="left:846px;width:89px;text-align:right;top:849px;height:23px;line-height:23px;white-space:nowrap;">100.000</div>
<div class="abs" style="left:936px;width:75px;text-align:center;top:849px;height:23px;line-height:23px;white-space:nowrap;">N</div>
<div class="abs" style="left:1051px;width:64px;text-align:right;top:849px;height:23px;line-height:23px;white-space:nowrap;">0.121</div>
<div class="abs" style="left:1116px;width:54px;text-align:right;top:849px;height:23px;line-height:23px;white-space:nowrap;">Netto</div>
<div class="abs" style="left:1171px;width:89px;text-align:right;top:849px;height:23px;line-height:23px;white-space:nowrap;">0.121</div>
<div class="abs" style="left:1261px;width:54px;text-align:right;top:849px;height:23px;line-height:23px;white-space:nowrap;">25.5</div>
<div class="abs" style="left:1316px;width:59px;text-align:right;top:849px;height:23px;line-height:23px;white-space:nowrap;">3.09</div>
<div class="abs" style="left:1376px;width:59px;text-align:right;top:849px;height:23px;line-height:23px;white-space:nowrap;">12.10</div>
<div class="abs" style="left:1436px;width:69px;text-align:right;top:849px;height:23px;line-height:23px;white-space:nowrap;">15.19</div>
<div class="abs" style="left:1711px;width:80px;text-align:center;top:849px;height:23px;line-height:23px;white-space:nowrap;">Materiaali</div>
<div class="abs" style="left:706px;width:77px;text-align:right;top:873px;height:24px;line-height:24px;white-space:nowrap;">1.000</div>
<div class="abs" style="left:788px;top:873px;height:24px;line-height:24px;white-space:nowrap;">kpl</div>
<div class="abs" style="left:846px;width:87px;text-align:right;top:873px;height:24px;line-height:24px;white-space:nowrap;">1.000</div>
<div class="abs" style="left:1051px;width:64px;text-align:right;top:873px;height:24px;line-height:24px;white-space:nowrap;">0.000</div>
<div class="abs" style="left:1116px;width:52px;text-align:right;top:873px;height:24px;line-height:24px;white-space:nowrap;">Netto</div>
<div class="abs" style="left:1171px;width:87px;text-align:right;top:873px;height:24px;line-height:24px;white-space:nowrap;">0.000</div>
<div class="abs" style="left:1316px;width:57px;text-align:right;top:873px;height:24px;line-height:24px;white-space:nowrap;">0.00</div>
<div class="abs" style="left:1376px;width:57px;text-align:right;top:873px;height:24px;line-height:24px;white-space:nowrap;">0.00</div>
<div class="abs" style="left:1436px;width:67px;text-align:right;top:873px;height:24px;line-height:24px;white-space:nowrap;">0.00</div>
<div class="abs" style="left:487px;top:879px;width:13px;height:13px;background:linear-gradient(#e6e6e6,#c9c9c9);border-right:1px solid #8f8f8f;border-bottom:1px solid #8f8f8f;border-top:1px solid #f4f4f4;border-left:1px solid #f4f4f4"><div style="position:absolute;left:2px;top:4px;width:0;height:0;border-left:4px solid transparent;border-right:4px solid transparent;border-top:4px solid #000"></div></div>
<div class="abs" style="left:570px;top:879px;width:13px;height:13px;background:linear-gradient(#e6e6e6,#c9c9c9);border-right:1px solid #8f8f8f;border-bottom:1px solid #8f8f8f;border-top:1px solid #f4f4f4;border-left:1px solid #f4f4f4"><div style="position:absolute;left:2px;top:4px;width:0;height:0;border-left:4px solid transparent;border-right:4px solid transparent;border-top:4px solid #000"></div></div>
<div class="abs" style="left:691px;top:879px;width:13px;height:13px;background:linear-gradient(#e6e6e6,#c9c9c9);border-right:1px solid #8f8f8f;border-bottom:1px solid #8f8f8f;border-top:1px solid #f4f4f4;border-left:1px solid #f4f4f4"><div style="position:absolute;left:2px;top:4px;width:0;height:0;border-left:4px solid transparent;border-right:4px solid transparent;border-top:4px solid #000"></div></div>
<div class="abs" style="left:828px;top:875px;width:1px;height:19px;background:#333"></div>
<div class="abs" style="left:833px;top:882px;width:0;height:0;border-left:4.5px solid transparent;border-right:4.5px solid transparent;border-top:5px solid #000"></div>
<svg class="abs" style="left:968px;top:875px" width="13" height="13" viewBox="0 0 13 13"><rect x="0.5" y="0.5" width="12" height="12" rx="2" fill="#fff" stroke="#767676"/></svg>
<div class="abs" style="left:1271px;top:873px;height:23px;line-height:23px">25.5</div>
<div class="abs" style="left:1298px;top:875px;width:1px;height:19px;background:#333"></div>
<div class="abs" style="left:1303px;top:882px;width:0;height:0;border-left:4.5px solid transparent;border-right:4.5px solid transparent;border-top:5px solid #000"></div>
<div class="abs" style="left:1718px;top:873px;height:23px;line-height:23px">Materiaali</div>
<svg class="abs" style="left:1777px;top:880px" width="10" height="7" viewBox="0 0 10 7"><path d="M1 1L5 5L9 1" fill="none" stroke="#000" stroke-width="2"/></svg>
<svg class="abs" style="left:8px;top:784px" width="14" height="14" viewBox="0 0 14 14"><circle cx="7" cy="7" r="6.4" fill="#d9534f"/><rect x="3.6" y="6.1" width="6.8" height="1.8" fill="#fff"/></svg>
<svg class="abs" style="left:25px;top:784px" width="25" height="14" viewBox="0 0 25 14"><path d="M5.5 13.5V1.5M1 6L5.5 1.5L10 6" fill="none" stroke="#000" stroke-width="1.6"/><path d="M19 0.5V12.5M14.5 8L19 12.5L23.5 8" fill="none" stroke="#000" stroke-width="1.6"/></svg>
<svg class="abs" style="left:58px;top:784px" width="14" height="14" viewBox="0 0 14 14"><circle cx="7" cy="7" r="6.6" fill="#0b8a0b"/><circle cx="7.1" cy="4.1" r="1" fill="#fff"/><path d="M5.8 6.2H7.8V9.9H8.5V10.9H5.7V9.9H6.5V7.2H5.8Z" fill="#fff"/></svg>
<svg class="abs" style="left:27px;top:808px" width="14" height="14" viewBox="0 0 14 14"><circle cx="7" cy="7" r="6.4" fill="#d9534f"/><rect x="3.6" y="6.1" width="6.8" height="1.8" fill="#fff"/></svg>
<svg class="abs" style="left:44px;top:809px" width="13" height="12" viewBox="0 0 13 12"><path d="M0 1.5C0 0.7 0.6 0 1.4 0H4.8L6.2 1.6H11.6C12.4 1.6 13 2.3 13 3V10.6C13 11.4 12.4 12 11.6 12H1.4C0.6 12 0 11.4 0 10.6Z" fill="#000"/><rect x="5.6" y="4" width="1.8" height="6" fill="#fff"/><rect x="3.5" y="6.1" width="6" height="1.8" fill="#fff"/></svg>
<svg class="abs" style="left:60px;top:809px" width="15" height="13" viewBox="0 0 15 13"><path d="M2.4 0.6H14.8L13.6 6.9H4Z" fill="#0b8a0b"/><path d="M0.3 0.6H2.3L4.3 8.5H13.4" fill="none" stroke="#0b8a0b" stroke-width="1.3"/><circle cx="5.3" cy="11.4" r="1.3" fill="#0b8a0b"/><circle cx="12.3" cy="11.4" r="1.3" fill="#0b8a0b"/><path d="M8.7 1.6V5.6M6.7 3.6H10.7" stroke="#fff" stroke-width="1.2"/></svg>
<svg class="abs" style="left:78px;top:809px" width="13" height="13" viewBox="0 0 13 13"><path d="M1.6 11.4L7 6" stroke="#0b8a0b" stroke-width="2.6" stroke-linecap="round"/><path d="M5.6 4.8A3.6 3.6 0 0 1 10.4 0.6L8.6 2.6L9 4L10.4 4.4L12.4 2.6A3.6 3.6 0 0 1 8.2 7.4Z" fill="#0b8a0b"/></svg>
<svg class="abs" style="left:94px;top:809px" width="13" height="12" viewBox="0 0 13 12"><path d="M3.3 0.3L6.3 2.3L3.3 4.3L0.3 2.3Z M9.7 0.3L12.7 2.3L9.7 4.3L6.7 2.3Z M3.3 4.7L6.3 6.7L3.3 8.7L0.3 6.7Z M9.7 4.7L12.7 6.7L9.7 8.7L6.7 6.7Z M6.5 7.4L9.2 9.2L6.5 11L3.8 9.2Z" fill="#0b8a0b"/></svg>
<svg class="abs" style="left:27px;top:831px" width="14" height="14" viewBox="0 0 14 14"><circle cx="7" cy="7" r="6.4" fill="#d9534f"/><rect x="3.6" y="6.1" width="6.8" height="1.8" fill="#fff"/></svg>
<svg class="abs" style="left:44px;top:832px" width="13" height="12" viewBox="0 0 13 12"><path d="M0 1.5C0 0.7 0.6 0 1.4 0H4.8L6.2 1.6H11.6C12.4 1.6 13 2.3 13 3V10.6C13 11.4 12.4 12 11.6 12H1.4C0.6 12 0 11.4 0 10.6Z" fill="#000"/><rect x="5.6" y="4" width="1.8" height="6" fill="#fff"/><rect x="3.5" y="6.1" width="6" height="1.8" fill="#fff"/></svg>
<svg class="abs" style="left:60px;top:832px" width="15" height="13" viewBox="0 0 15 13"><path d="M2.4 0.6H14.8L13.6 6.9H4Z" fill="#0b8a0b"/><path d="M0.3 0.6H2.3L4.3 8.5H13.4" fill="none" stroke="#0b8a0b" stroke-width="1.3"/><circle cx="5.3" cy="11.4" r="1.3" fill="#0b8a0b"/><circle cx="12.3" cy="11.4" r="1.3" fill="#0b8a0b"/><path d="M8.7 1.6V5.6M6.7 3.6H10.7" stroke="#fff" stroke-width="1.2"/></svg>
<svg class="abs" style="left:78px;top:832px" width="13" height="13" viewBox="0 0 13 13"><path d="M1.6 11.4L7 6" stroke="#0b8a0b" stroke-width="2.6" stroke-linecap="round"/><path d="M5.6 4.8A3.6 3.6 0 0 1 10.4 0.6L8.6 2.6L9 4L10.4 4.4L12.4 2.6A3.6 3.6 0 0 1 8.2 7.4Z" fill="#0b8a0b"/></svg>
<svg class="abs" style="left:94px;top:832px" width="13" height="12" viewBox="0 0 13 12"><path d="M3.3 0.3L6.3 2.3L3.3 4.3L0.3 2.3Z M9.7 0.3L12.7 2.3L9.7 4.3L6.7 2.3Z M3.3 4.7L6.3 6.7L3.3 8.7L0.3 6.7Z M9.7 4.7L12.7 6.7L9.7 8.7L6.7 6.7Z M6.5 7.4L9.2 9.2L6.5 11L3.8 9.2Z" fill="#0b8a0b"/></svg>
<svg class="abs" style="left:23px;top:854px" width="14" height="14" viewBox="0 0 14 14"><circle cx="7" cy="7" r="6.4" fill="#d9534f"/><rect x="3.6" y="6.1" width="6.8" height="1.8" fill="#fff"/></svg>
<svg class="abs" style="left:40px;top:855px" width="13" height="12" viewBox="0 0 13 12"><path d="M0 1.5C0 0.7 0.6 0 1.4 0H4.8L6.2 1.6H11.6C12.4 1.6 13 2.3 13 3V10.6C13 11.4 12.4 12 11.6 12H1.4C0.6 12 0 11.4 0 10.6Z" fill="#0b8a0b"/><rect x="5.6" y="4" width="1.8" height="6" fill="#fff"/><rect x="3.5" y="6.1" width="6" height="1.8" fill="#fff"/></svg>
<svg class="abs" style="left:56px;top:855px" width="15" height="13" viewBox="0 0 15 13"><path d="M2.4 0.6H14.8L13.6 6.9H4Z" fill="#0b8a0b"/><path d="M0.3 0.6H2.3L4.3 8.5H13.4" fill="none" stroke="#0b8a0b" stroke-width="1.3"/><circle cx="5.3" cy="11.4" r="1.3" fill="#0b8a0b"/><circle cx="12.3" cy="11.4" r="1.3" fill="#0b8a0b"/><path d="M8.7 1.6V5.6M6.7 3.6H10.7" stroke="#fff" stroke-width="1.2"/></svg>
<svg class="abs" style="left:74px;top:855px" width="13" height="13" viewBox="0 0 13 13"><path d="M1.6 11.4L7 6" stroke="#0b8a0b" stroke-width="2.6" stroke-linecap="round"/><path d="M5.6 4.8A3.6 3.6 0 0 1 10.4 0.6L8.6 2.6L9 4L10.4 4.4L12.4 2.6A3.6 3.6 0 0 1 8.2 7.4Z" fill="#0b8a0b"/></svg>
<svg class="abs" style="left:90px;top:855px" width="13" height="12" viewBox="0 0 13 12"><path d="M3.3 0.3L6.3 2.3L3.3 4.3L0.3 2.3Z M9.7 0.3L12.7 2.3L9.7 4.3L6.7 2.3Z M3.3 4.7L6.3 6.7L3.3 8.7L0.3 6.7Z M9.7 4.7L12.7 6.7L9.7 8.7L6.7 6.7Z M6.5 7.4L9.2 9.2L6.5 11L3.8 9.2Z" fill="#0b8a0b"/></svg>
<svg class="abs" style="left:23px;top:877px" width="14" height="14" viewBox="0 0 14 14"><circle cx="7" cy="7" r="6.4" fill="#5cb85c"/><rect x="3.6" y="6.1" width="6.8" height="1.8" fill="#fff"/><rect x="6.1" y="3.6" width="1.8" height="6.8" fill="#fff"/></svg>
<svg class="abs" style="left:40px;top:878px" width="13" height="12" viewBox="0 0 13 12"><path d="M0 1.5C0 0.7 0.6 0 1.4 0H4.8L6.2 1.6H11.6C12.4 1.6 13 2.3 13 3V10.6C13 11.4 12.4 12 11.6 12H1.4C0.6 12 0 11.4 0 10.6Z" fill="#555"/><rect x="5.6" y="4" width="1.8" height="6" fill="#fff"/><rect x="3.5" y="6.1" width="6" height="1.8" fill="#fff"/></svg>
<svg class="abs" style="left:56px;top:878px" width="15" height="13" viewBox="0 0 15 13"><path d="M2.4 0.6H14.8L13.6 6.9H4Z" fill="#555"/><path d="M0.3 0.6H2.3L4.3 8.5H13.4" fill="none" stroke="#555" stroke-width="1.3"/><circle cx="5.3" cy="11.4" r="1.3" fill="#555"/><circle cx="12.3" cy="11.4" r="1.3" fill="#555"/><path d="M8.7 1.6V5.6M6.7 3.6H10.7" stroke="#fff" stroke-width="1.2"/></svg>
<svg class="abs" style="left:74px;top:878px" width="13" height="13" viewBox="0 0 13 13"><path d="M1.6 11.4L7 6" stroke="#555" stroke-width="2.6" stroke-linecap="round"/><path d="M5.6 4.8A3.6 3.6 0 0 1 10.4 0.6L8.6 2.6L9 4L10.4 4.4L12.4 2.6A3.6 3.6 0 0 1 8.2 7.4Z" fill="#555"/></svg>
<div class="abs" style="left:130px;top:779px;width:1px;height:2px;background:#dee2e6"></div>
<div class="abs" style="left:141px;top:779px;width:1px;height:2px;background:#dee2e6"></div>
<div class="abs" style="left:171px;top:779px;width:1px;height:2px;background:#dee2e6"></div>
<div class="abs" style="left:302px;top:779px;width:1px;height:2px;background:#dee2e6"></div>
<svg class="abs" style="left:105px;top:855px" width="6" height="12" viewBox="0 0 6 12"><path d="M5 1.5A4.5 4.5 0 0 0 5 10.5" fill="none" stroke="#0b8a0b" stroke-width="1.8"/></svg>
<div class="abs" style="left:111px;top:780px;width:372px;height:161px;background:#fff;border:1px solid #c8c8c8;box-shadow:0 1px 3px rgba(0,0,0,0.08)"></div>
<div class="abs" style="left:112px;top:781px;width:370px;height:30px;background:#e9ecef;border-bottom:1px solid #c8c8c8"></div>
<div class="abs" style="left:122px;top:781px;height:29px;line-height:29px;font-size:13px;color:#222">Tuote</div>
<svg class="abs" style="left:461px;top:792px" width="11" height="11" viewBox="0 0 11 11"><path d="M1.5 1.5L9.5 9.5M9.5 1.5L1.5 9.5" stroke="#000" stroke-width="2.4"/></svg>
<div class="abs" style="left:123px;top:817px;height:18px;line-height:18px;font-size:11px;color:#222;letter-spacing:0.12px">Tuoteid</div>
<div class="abs" style="left:325px;top:817px;height:18px;line-height:18px;font-size:11px;color:#222;letter-spacing:0.12px">2161</div>
<div class="abs" style="left:123px;top:836px;height:18px;line-height:18px;font-size:11px;color:#222;letter-spacing:0.12px">Tuotenumero</div>
<div class="abs" style="left:325px;top:836px;height:18px;line-height:18px;font-size:11px;color:#222;letter-spacing:0.12px"><b>10109</b></div>
<div class="abs" style="left:123px;top:855px;height:18px;line-height:18px;font-size:11px;color:#222;letter-spacing:0.12px">Tuotenimike</div>
<div class="abs" style="left:325px;top:855px;height:18px;line-height:18px;font-size:11px;color:#222;letter-spacing:0.12px">Suojatulppa</div>
<div class="abs" style="left:123px;top:874px;height:18px;line-height:18px;font-size:11px;color:#222;letter-spacing:0.12px">Kuvaus</div>
<div class="abs" style="left:325px;top:874px;height:18px;line-height:18px;font-size:11px;color:#222;letter-spacing:0.12px">Pöydät</div>
<div class="abs" style="left:123px;top:894px;height:18px;line-height:18px;font-size:11px;color:#222;letter-spacing:0.12px">Varastoon lisäys</div>
<svg class="abs" style="left:325px;top:894px" width="13" height="13" viewBox="0 0 13 13"><rect x="0" y="0" width="13" height="13" rx="2" fill="#d9d9d9"/><path d="M3 6.6L5.4 9L10 4.2" fill="none" stroke="#fff" stroke-width="1.6"/></svg>
<div class="abs" style="left:123px;top:914px;height:18px;line-height:18px;font-size:11px;color:#222;letter-spacing:0.12px">Varastokulutus</div>
<svg class="abs" style="left:325px;top:914px" width="13" height="13" viewBox="0 0 13 13"><rect x="0" y="0" width="13" height="13" rx="2" fill="#d9d9d9"/><path d="M3 6.6L5.4 9L10 4.2" fill="none" stroke="#fff" stroke-width="1.6"/></svg>
<div class="abs" style="left:447px;top:827px;width:35px;height:35px;border:4px solid #f5b400;box-shadow:2px 2px 3px rgba(0,0,0,0.55), inset 2px 2px 3px rgba(0,0,0,0.45);background:#fff"></div>
<svg class="abs" style="left:459px;top:839px" width="12" height="12" viewBox="0 0 12 12"><circle cx="6" cy="6" r="6" fill="#0b8a0b"/><path d="M2.8 6H8.6M6.2 3.4L8.8 6L6.2 8.6" fill="none" stroke="#fff" stroke-width="1.4"/></svg>
<div class="abs" id="toast" style="left:1481px;top:40px;width:348px;height:85px;box-shadow:0 2px 6px rgba(0,0,0,0.25)">
  <div class="abs" style="left:0;top:0;width:348px;height:31px;background:#fdf9f8;border-bottom:1px solid #dccaca"></div>
  <div class="abs" style="left:10px;top:9px;font-size:11px;font-weight:bold;color:#555c63;letter-spacing:0.18px">Alkuperäistä tuotenumeroa on muutettu</div>
  <svg class="abs" style="left:328px;top:8px" width="13" height="13" viewBox="0 0 13 13"><path d="M1 1L12 12M12 1L1 12" stroke="#777" stroke-width="1.3"/></svg>
  <div class="abs" style="left:0;top:31px;width:348px;height:54px;background:#f8dede"></div>
  <div class="abs" style="left:10px;top:41px;font-size:11px;line-height:17px;color:#5e1f1f;width:335px;letter-spacing:0.17px">Rivillä 3 oleva tuotteen ID vastaa tuotenumeroa 10109, ja varastokulutus on sen mukainen</div>
</div>
<div class="abs" id="rightline"></div>
</body></html>
